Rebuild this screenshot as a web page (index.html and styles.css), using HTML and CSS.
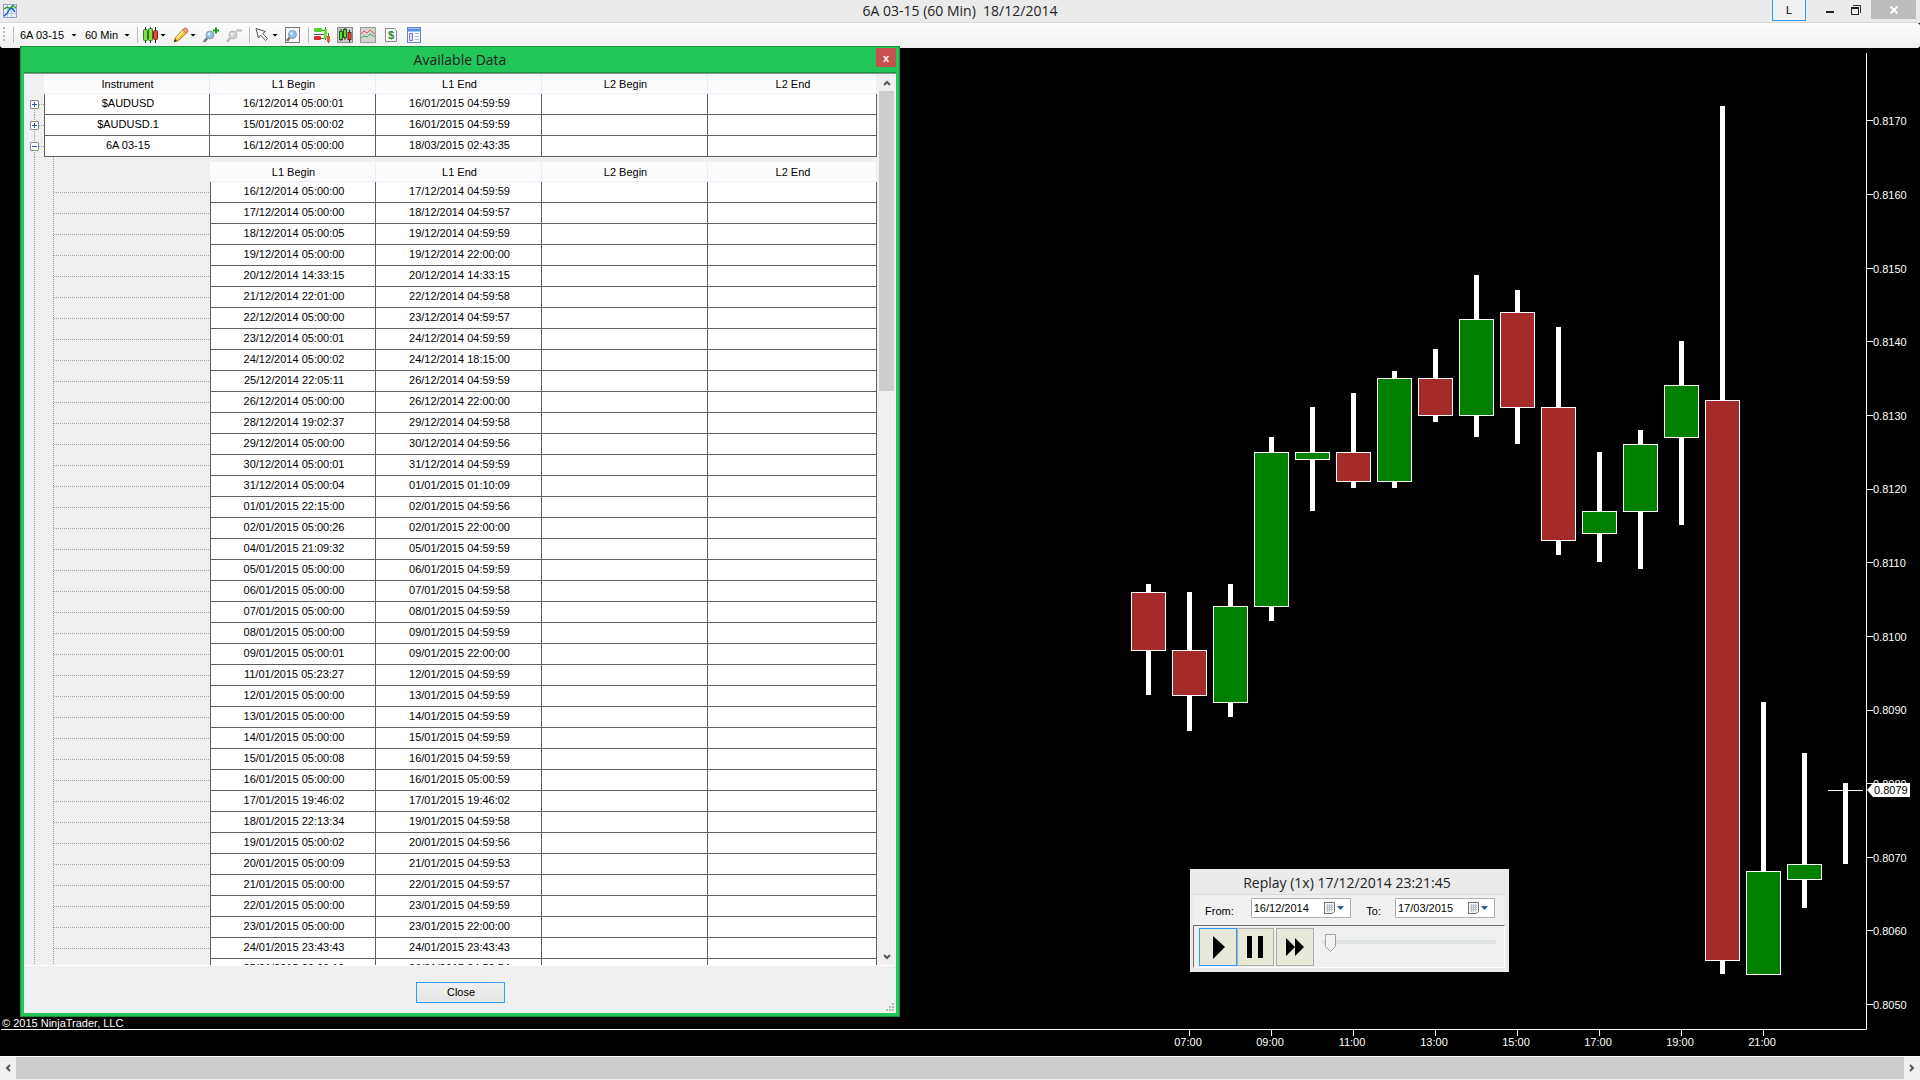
FILE: index.html
```html
<!DOCTYPE html>
<html lang="en">
<head>
<meta charset="utf-8">
<title>6A 03-15 (60 Min) 18/12/2014</title>
<link rel="stylesheet" href="styles.css">
</head>
<body>
<header class="titlebar">
  <svg class="app-icon" width="14" height="14" viewBox="0 0 14 14"><rect x=".5" y=".5" width="13" height="13" fill="#e8f0fa" stroke="#8f9fd0"/><path d="M4.500 1v12M8.500 1v12M1 4.500h12M1 9.500h12" stroke="#b9c6e6"/><path d="M1 5L4 3L7 4.500L10 1.500L13 4" fill="none" stroke="#2aa52a" stroke-width="1.500"/><path d="M1 12L4 9.500L6 6L9 4L12 8" fill="none" stroke="#1f66c8" stroke-width="1.500"/></svg>
  <h1 class="title">6A 03-15 (60 Min)&nbsp; 18/12/2014</h1>
  <div class="window-buttons">
    <button class="link-button">L</button>
    <button class="caption-button" aria-label="Minimize"><svg width="10" height="10" viewBox="0 0 10 10"><path d="M1 7h8" stroke="#222" stroke-width="2"/></svg></button>
    <button class="caption-button" aria-label="Restore"><svg width="10" height="10" viewBox="0 0 10 10"><path d="M2 .5h7.500V8" fill="none" stroke="#333"/><rect x=".5" y="3" width="7" height="6.500" fill="none" stroke="#222"/><path d="M0 3h8" stroke="#222" stroke-width="2"/></svg></button>
    <button class="caption-button caption-close" aria-label="Close window"><svg width="8" height="8" viewBox="0 0 8 8"><path d="M.5 .5l7 7M7.500 .5l-7 7" stroke="#fff" stroke-width="2"/></svg></button>
  </div>
</header>

<nav class="toolbar" aria-label="Chart">
  <span class="grip"></span>
  <span class="separator"></span>
  <button class="combo instrument">6A 03-15<i class="caret"></i></button>
  <button class="combo">60 Min<i class="caret"></i></button>
  <span class="separator"></span>
  <button class="tool drop" aria-label="Chart style"><svg width="16" height="16" viewBox="0 0 16 16"><path d="M2.500 0v16M7.500 0v16M12.500 0v16" stroke="#222"/><rect x=".5" y="2.500" width="4" height="11" rx="1" fill="#7ee04e" stroke="#2b7a1c"/><rect x="5.500" y="1.500" width="4" height="12" rx="1" fill="#7ee04e" stroke="#2b7a1c"/><rect x="10.500" y="3.500" width="4" height="9" rx="1" fill="#e8453c" stroke="#8e1e18"/></svg><i class="caret"></i></button>
  <button class="tool drop" aria-label="Drawing tools"><svg width="16" height="16" viewBox="0 0 16 16"><path d="M1 15l1.500-4.500L11 1.500q1.500-1 3 .5t.5 3L5.500 13.500z" fill="#f8c63c" stroke="#b07818"/><path d="M3.500 11L12 2.500" stroke="#fff0a8" stroke-width="1.500"/><path d="M11 1.500q1.500-1 3 .5t.5 3l-1.500 1.300L9.700 3z" fill="#e8a08c" stroke="#a8654c" stroke-width=".7"/><path d="M1 15l1-3 2 2z" fill="#333"/></svg><i class="caret"></i></button>
  <button class="tool" aria-label="Zoom in"><svg width="16" height="16" viewBox="0 0 16 16"><path d="M5 10l-4 5" stroke="#777" stroke-width="2.500"/><circle cx="7" cy="8" r="4" fill="#8cc3ee" stroke="#8d9db0"/><circle cx="6" cy="7" r="1.500" fill="#d8effc"/><path d="M10 3.500h6M13 .5v6" stroke="#0ca31a" stroke-width="2"/></svg></button>
  <button class="tool" aria-label="Zoom out"><svg width="16" height="16" viewBox="0 0 16 16"><path d="M5 10l-4 5" stroke="#bbb" stroke-width="2.500"/><circle cx="7" cy="8" r="4" fill="#d4d4d4" stroke="#b5b5b5"/><circle cx="6" cy="7" r="1.500" fill="#eee"/><path d="M10 3.500h6" stroke="#bbb" stroke-width="2"/></svg></button>
  <span class="separator"></span>
  <button class="tool drop" aria-label="Cursor"><svg width="16" height="16" viewBox="0 0 16 16"><path d="M1 1.500l9.500 3-3 2 5 5-2 2-5-5.500-2 3z" fill="#fff" stroke="#555"/></svg><i class="caret"></i></button>
  <button class="tool" aria-label="Zoom frame"><svg width="16" height="16" viewBox="0 0 16 16"><rect x=".5" y=".5" width="14" height="15" fill="#fafafa" stroke="#777"/><path d="M5 10l-3 4" stroke="#777" stroke-width="2.500"/><circle cx="7.500" cy="7.500" r="4" fill="#8cc3ee" stroke="#8d9db0"/><circle cx="6.500" cy="6.500" r="1.500" fill="#d8effc"/></svg></button>
  <span class="separator"></span>
  <button class="tool" aria-label="Chart trader"><svg width="16" height="16" viewBox="0 0 16 16"><rect x="0" y="1" width="8" height="4" rx="1" fill="#4fd62e"/><rect x="0" y="9" width="7" height="4" rx="1" fill="#e02a20"/><path d="M0 7.500h10M8 3.500h3M7 11.500h3" stroke="#555"/><path d="M11.500 0v13M14.500 6v10" stroke="#555"/><rect x="10" y="2" width="3" height="10" fill="#6ddc3c"/><rect x="13" y="9" width="3" height="6" fill="#e8564c"/></svg></button>
  <button class="tool" aria-label="Data series"><svg width="16" height="16" viewBox="0 0 16 16"><rect x=".5" y=".5" width="15" height="15" fill="#ccc" stroke="#8a8a8a"/><path d="M4 2v12M8 1v12M12.500 3v12" stroke="#222"/><rect x="2.500" y="4.500" width="3" height="8" fill="#5fd63c" stroke="#245c18"/><rect x="6.500" y="2.500" width="3" height="8" fill="#5fd63c" stroke="#245c18"/><rect x="11" y="5.500" width="3" height="7" fill="#e8453c" stroke="#7a1c16"/></svg></button>
  <button class="tool" aria-label="Indicators"><svg width="16" height="16" viewBox="0 0 16 16"><rect x=".5" y=".5" width="15" height="15" fill="#d2d4d4" stroke="#9a9a9a"/><path d="M1 7l3-3 3 2 3-3 5 4" fill="none" stroke="#e2574c"/><path d="M1 11l3-2 3 1 3-3 5 3" fill="none" stroke="#3fae6a"/></svg></button>
  <button class="tool" aria-label="Strategies"><svg width="16" height="16" viewBox="0 0 16 16"><path d="M2.500 1.500h9l2 2v11h-11z" fill="#fff" stroke="#888"/><text class="dollar" x="8" y="12">$</text></svg></button>
  <button class="tool" aria-label="Properties"><svg width="16" height="16" viewBox="0 0 16 16"><rect x="1.500" y=".5" width="13" height="15" fill="#f6f8fc" stroke="#6a83b8"/><path d="M2 3h12" stroke="#4f8fe8" stroke-width="3"/><rect x="3.500" y="6.500" width="3" height="7" fill="#e2dcfa" stroke="#8a6fe0"/><path d="M9 6.500h4M9 9.500h4M9 12.500h4" stroke="#a9bcdc"/></svg></button>
</nav>

<main class="workspace">
  <svg class="chart" viewBox="0 48 1920 1008" preserveAspectRatio="xMaxYMax meet">
    <path class="axis" d="M1866.500 53V1029.500H1"/>
    <path class="axis" d="M1867 120.500h6M1867 194.500h6M1867 268.500h6M1867 341.500h6M1867 415.500h6M1867 489.500h6M1867 562.500h6M1867 636.500h6M1867 710.500h6M1867 783.500h6M1867 857.500h6M1867 930.500h6M1867 1004.500h6"/>
    <path class="axis" d="M1189.500 1030v6M1271.500 1030v6M1353.500 1030v6M1435.500 1030v6M1517.500 1030v6M1599.500 1030v6M1681.500 1030v6M1763.500 1030v6"/>
    <g class="price">
      <text x="1873" y="125">0.8170</text><text x="1873" y="199">0.8160</text><text x="1873" y="273">0.8150</text><text x="1873" y="346">0.8140</text><text x="1873" y="420">0.8130</text><text x="1873" y="493">0.8120</text><text x="1873" y="567">0.8110</text><text x="1873" y="641">0.8100</text><text x="1873" y="714">0.8090</text><text x="1873" y="788">0.8080</text><text x="1873" y="862">0.8070</text><text x="1873" y="935">0.8060</text><text x="1873" y="1009">0.8050</text>
    </g>
    <g class="time">
      <text x="1188" y="1046">07:00</text><text x="1270" y="1046">09:00</text><text x="1352" y="1046">11:00</text><text x="1434" y="1046">13:00</text><text x="1516" y="1046">15:00</text><text x="1598" y="1046">17:00</text><text x="1680" y="1046">19:00</text><text x="1762" y="1046">21:00</text>
    </g>
    <text class="price" x="2" y="1027">© 2015 NinjaTrader, LLC</text>
    <path class="wick" d="M1148.500 584V695M1189.500 592V731M1230.500 584V717M1271.500 437V621M1312.500 407V511M1353.500 393V488M1394.500 371V488M1435.500 349V422M1476.500 275V437M1517.500 290V444M1558.500 327V555M1599.500 452V562M1640.500 430V569M1681.500 341V525M1722.500 106V974M1763.500 702V871M1804.500 753V908M1845.500 783V864"/>
    <path class="axis" d="M1828 790.500h35"/>
    <g class="down">
      <rect x="1131.500" y="592.500" width="34" height="58"/><rect x="1172.500" y="650.500" width="34" height="45"/><rect x="1336.500" y="452.500" width="34" height="29"/><rect x="1418.500" y="378.500" width="34" height="37"/><rect x="1500.500" y="312.500" width="34" height="95"/><rect x="1541.500" y="407.500" width="34" height="133"/><rect x="1705.500" y="400.500" width="34" height="560"/>
    </g>
    <g class="up">
      <rect x="1213.500" y="606.500" width="34" height="96"/><rect x="1254.500" y="452.500" width="34" height="154"/><rect x="1295.500" y="452.500" width="34" height="7"/><rect x="1377.500" y="378.500" width="34" height="103"/><rect x="1459.500" y="319.500" width="34" height="96"/><rect x="1582.500" y="511.500" width="34" height="22"/><rect x="1623.500" y="444.500" width="34" height="67"/><rect x="1664.500" y="385.500" width="34" height="52"/><rect x="1746.500" y="871.500" width="34" height="103"/><rect x="1787.500" y="864.500" width="34" height="15"/>
    </g>
    <path class="last-flag" d="M1867 790L1873 783H1910V797H1873z"/>
    <text class="last-price" x="1874" y="794">0.8079</text>
  </svg>

  <section class="dialog" aria-labelledby="dlg-title">
    <div class="dialog-title">
      <h2 id="dlg-title">Available Data</h2>
      <button class="dialog-x" aria-label="Close dialog">x</button>
    </div>
    <div class="grid-area">
      <div class="tables">
        <table class="grid">
          <colgroup><col class="c-tree"><col><col><col><col><col class="c-last"></colgroup>
          <thead><tr><th class="gutter"></th><th>Instrument</th><th>L1 Begin</th><th>L1 End</th><th>L2 Begin</th><th>L2 End</th></tr></thead>
          <tbody>
            <tr><td class="gutter branch first"><button class="expander plus" aria-label="Expand"></button></td><td>$AUDUSD</td><td>16/12/2014 05:00:01</td><td>16/01/2015 04:59:59</td><td></td><td></td></tr>
            <tr><td class="gutter branch"><button class="expander plus" aria-label="Expand"></button></td><td>$AUDUSD.1</td><td>15/01/2015 05:00:02</td><td>16/01/2015 04:59:59</td><td></td><td></td></tr>
            <tr><td class="gutter branch"><button class="expander" aria-label="Collapse"></button></td><td>6A 03-15</td><td>16/12/2014 05:00:00</td><td>18/03/2015 02:43:35</td><td></td><td></td></tr>
          </tbody>
        </table>
        <table class="grid child">
          <colgroup><col class="c-indent"><col><col><col><col class="c-last"></colgroup>
          <thead><tr><th class="gutter"></th><th>L1 Begin</th><th>L1 End</th><th>L2 Begin</th><th>L2 End</th></tr></thead>
          <tbody>
            <tr><td class="gutter"></td><td>16/12/2014 05:00:00</td><td>17/12/2014 04:59:59</td><td></td><td></td></tr>
            <tr><td class="gutter"></td><td>17/12/2014 05:00:00</td><td>18/12/2014 04:59:57</td><td></td><td></td></tr>
            <tr><td class="gutter"></td><td>18/12/2014 05:00:05</td><td>19/12/2014 04:59:59</td><td></td><td></td></tr>
            <tr><td class="gutter"></td><td>19/12/2014 05:00:00</td><td>19/12/2014 22:00:00</td><td></td><td></td></tr>
            <tr><td class="gutter"></td><td>20/12/2014 14:33:15</td><td>20/12/2014 14:33:15</td><td></td><td></td></tr>
            <tr><td class="gutter"></td><td>21/12/2014 22:01:00</td><td>22/12/2014 04:59:58</td><td></td><td></td></tr>
            <tr><td class="gutter"></td><td>22/12/2014 05:00:00</td><td>23/12/2014 04:59:57</td><td></td><td></td></tr>
            <tr><td class="gutter"></td><td>23/12/2014 05:00:01</td><td>24/12/2014 04:59:59</td><td></td><td></td></tr>
            <tr><td class="gutter"></td><td>24/12/2014 05:00:02</td><td>24/12/2014 18:15:00</td><td></td><td></td></tr>
            <tr><td class="gutter"></td><td>25/12/2014 22:05:11</td><td>26/12/2014 04:59:59</td><td></td><td></td></tr>
            <tr><td class="gutter"></td><td>26/12/2014 05:00:00</td><td>26/12/2014 22:00:00</td><td></td><td></td></tr>
            <tr><td class="gutter"></td><td>28/12/2014 19:02:37</td><td>29/12/2014 04:59:58</td><td></td><td></td></tr>
            <tr><td class="gutter"></td><td>29/12/2014 05:00:00</td><td>30/12/2014 04:59:56</td><td></td><td></td></tr>
            <tr><td class="gutter"></td><td>30/12/2014 05:00:01</td><td>31/12/2014 04:59:59</td><td></td><td></td></tr>
            <tr><td class="gutter"></td><td>31/12/2014 05:00:04</td><td>01/01/2015 01:10:09</td><td></td><td></td></tr>
            <tr><td class="gutter"></td><td>01/01/2015 22:15:00</td><td>02/01/2015 04:59:56</td><td></td><td></td></tr>
            <tr><td class="gutter"></td><td>02/01/2015 05:00:26</td><td>02/01/2015 22:00:00</td><td></td><td></td></tr>
            <tr><td class="gutter"></td><td>04/01/2015 21:09:32</td><td>05/01/2015 04:59:59</td><td></td><td></td></tr>
            <tr><td class="gutter"></td><td>05/01/2015 05:00:00</td><td>06/01/2015 04:59:59</td><td></td><td></td></tr>
            <tr><td class="gutter"></td><td>06/01/2015 05:00:00</td><td>07/01/2015 04:59:58</td><td></td><td></td></tr>
            <tr><td class="gutter"></td><td>07/01/2015 05:00:00</td><td>08/01/2015 04:59:59</td><td></td><td></td></tr>
            <tr><td class="gutter"></td><td>08/01/2015 05:00:00</td><td>09/01/2015 04:59:59</td><td></td><td></td></tr>
            <tr><td class="gutter"></td><td>09/01/2015 05:00:01</td><td>09/01/2015 22:00:00</td><td></td><td></td></tr>
            <tr><td class="gutter"></td><td>11/01/2015 05:23:27</td><td>12/01/2015 04:59:59</td><td></td><td></td></tr>
            <tr><td class="gutter"></td><td>12/01/2015 05:00:00</td><td>13/01/2015 04:59:59</td><td></td><td></td></tr>
            <tr><td class="gutter"></td><td>13/01/2015 05:00:00</td><td>14/01/2015 04:59:59</td><td></td><td></td></tr>
            <tr><td class="gutter"></td><td>14/01/2015 05:00:00</td><td>15/01/2015 04:59:59</td><td></td><td></td></tr>
            <tr><td class="gutter"></td><td>15/01/2015 05:00:08</td><td>16/01/2015 04:59:59</td><td></td><td></td></tr>
            <tr><td class="gutter"></td><td>16/01/2015 05:00:00</td><td>16/01/2015 05:00:59</td><td></td><td></td></tr>
            <tr><td class="gutter"></td><td>17/01/2015 19:46:02</td><td>17/01/2015 19:46:02</td><td></td><td></td></tr>
            <tr><td class="gutter"></td><td>18/01/2015 22:13:34</td><td>19/01/2015 04:59:58</td><td></td><td></td></tr>
            <tr><td class="gutter"></td><td>19/01/2015 05:00:02</td><td>20/01/2015 04:59:56</td><td></td><td></td></tr>
            <tr><td class="gutter"></td><td>20/01/2015 05:00:09</td><td>21/01/2015 04:59:53</td><td></td><td></td></tr>
            <tr><td class="gutter"></td><td>21/01/2015 05:00:00</td><td>22/01/2015 04:59:57</td><td></td><td></td></tr>
            <tr><td class="gutter"></td><td>22/01/2015 05:00:00</td><td>23/01/2015 04:59:59</td><td></td><td></td></tr>
            <tr><td class="gutter"></td><td>23/01/2015 05:00:00</td><td>23/01/2015 22:00:00</td><td></td><td></td></tr>
            <tr><td class="gutter"></td><td>24/01/2015 23:43:43</td><td>24/01/2015 23:43:43</td><td></td><td></td></tr>
            <tr><td class="gutter"></td><td>25/01/2015 22:00:10</td><td>26/01/2015 04:59:54</td><td></td><td></td></tr>
          </tbody>
        </table>
      </div>
      <div class="v-scroll">
        <button class="scroll-arrow" aria-label="Scroll up"><svg width="8" height="6" viewBox="0 0 8 6"><path d="M1 5l3-3 3 3" fill="none" stroke="#555" stroke-width="2"/></svg></button>
        <div class="v-track"><div class="v-thumb"></div></div>
        <button class="scroll-arrow" aria-label="Scroll down"><svg width="8" height="6" viewBox="0 0 8 6"><path d="M1 1l3 3 3-3" fill="none" stroke="#555" stroke-width="2"/></svg></button>
      </div>
    </div>
    <div class="dialog-footer">
      <button class="close-button">Close</button>
      <svg class="size-grip" width="8" height="8" viewBox="0 0 8 8"><path d="M6 0h2v2H6zM3 3h2v2H3zM6 3h2v2H6zM0 6h2v2H0zM3 6h2v2H3zM6 6h2v2H6z" fill="#b8b8b8"/></svg>
    </div>
  </section>

  <section class="replay" aria-labelledby="replay-title">
    <h2 id="replay-title">Replay (1x) 17/12/2014 23:21:45</h2>
    <div class="replay-dates">
      <label for="from">From:</label>
      <div class="date-box"><input id="from" type="text" value="16/12/2014"><button class="date-drop" aria-label="Pick start date"><svg width="20" height="12" viewBox="0 0 20 12"><path d="M.5 .5h10v9l-2 2h-8z" fill="#f4f4f4" stroke="#7d6f70"/><path d="M2 3.500h7M2 5.500h7M2 7.500h7M3.500 2v8M5.500 2v8M7.500 2v7" stroke="#b9c3d4"/><path d="M13 4h7l-3.500 4z" fill="#2f5597"/></svg></button></div>
      <label for="to">To:</label>
      <div class="date-box"><input id="to" type="text" value="17/03/2015"><button class="date-drop" aria-label="Pick end date"><svg width="20" height="12" viewBox="0 0 20 12"><path d="M.5 .5h10v9l-2 2h-8z" fill="#f4f4f4" stroke="#7d6f70"/><path d="M2 3.500h7M2 5.500h7M2 7.500h7M3.500 2v8M5.500 2v8M7.500 2v7" stroke="#b9c3d4"/><path d="M13 4h7l-3.500 4z" fill="#2f5597"/></svg></button></div>
    </div>
    <div class="replay-controls">
      <button class="play active" aria-label="Play"><svg width="20" height="24" viewBox="0 0 20 24"><path d="M5 1l12 11-12 12z"/></svg></button>
      <button class="play" aria-label="Pause"><svg width="20" height="24" viewBox="0 0 20 24"><path d="M1 1h5v22H1zM12 1h5v22h-5z"/></svg></button>
      <button class="play fast" aria-label="Fast forward"><svg width="20" height="24" viewBox="0 0 20 24"><path d="M1 3l9 9-9 9zM10 3l9 9-9 9z"/></svg></button>
      <input class="speed" type="range" min="0" max="100" value="2" aria-label="Replay speed">
    </div>
  </section>
</main>

<div class="h-scroll">
  <button class="scroll-arrow" aria-label="Scroll left"><svg width="6" height="8" viewBox="0 0 6 8"><path d="M5 1L2 4l3 3" fill="none" stroke="#555" stroke-width="2"/></svg></button>
  <div class="h-thumb"></div>
  <button class="scroll-arrow" aria-label="Scroll right"><svg width="6" height="8" viewBox="0 0 6 8"><path d="M1 1l3 3-3 3" fill="none" stroke="#555" stroke-width="2"/></svg></button>
</div>
</body>
</html>
```
FILE: styles.css
```css
* {
  box-sizing: border-box;
}

body {
  margin: 0;
  height: 100vh;
  display: flex;
  flex-direction: column;
  overflow: hidden;
  background: #000;
  color: #000;
  font: 11px/16px "Liberation Sans", Arial, sans-serif;
}

button {
  margin: 0;
  padding: 0;
  border: 0;
  background: none;
  color: inherit;
  font: inherit;
  display: flex;
  align-items: center;
  justify-content: center;
}

svg {
  display: block;
  flex: none;
}

h1,
h2 {
  margin: 0;
  font: 14px/22px "Open Sans", "Segoe UI", sans-serif;
  text-align: center;
  color: #222;
}

/* Title bar */

.titlebar {
  height: 23px;
  flex: none;
  display: grid;
  grid-template-columns: 1fr auto 1fr;
  align-items: center;
  padding: 0 3px;
  background: #ebebeb;
  border-bottom: 1px solid #d8d8d8;
}

.title {
  line-height: 22px;
}

.window-buttons {
  display: flex;
  justify-content: flex-end;
  align-self: start;
  gap: 12px;
}

.link-button {
  width: 34px;
  height: 21px;
  margin-right: 5px;
  border: 1px solid #3399ff;
  border-top: 0;
  background: #f0f0f0;
}

.caption-button {
  width: 14px;
  height: 19px;
}

.caption-close {
  width: 45px;
  margin-right: 1px;
  margin-left: -4px;
  background: #bcbcbc;
}

/* Toolbar */

.toolbar {
  height: 25px;
  flex: none;
  display: flex;
  align-items: center;
  padding: 0 2px 1px;
  background: linear-gradient(#fdfdfd, #f0f0f0);
  border-radius: 0 3px 3px 3px;
}

.grip {
  width: 4px;
  height: 16px;
  background: repeating-linear-gradient(#bdbdbd 0 2px, transparent 2px 4px) 1px 0 / 2px 100% no-repeat;
}

.separator {
  width: 1px;
  height: 16px;
  margin: 0 5px 0 7px;
  background: #bdbdbd;
}

.combo {
  gap: 6px;
  padding-left: 1px;
  justify-content: space-between;
}

.instrument {
  width: 58px;
}

.combo + .combo {
  margin-left: 7px;
}

.caret {
  width: 6px;
  height: 3px;
  background: #000;
  clip-path: polygon(0 0, 100% 0, 50% 100%);
}

.drop {
  gap: 1px;
}

.tool + .tool {
  margin-left: 7px;
}

.dollar {
  font: bold 11px "Liberation Sans", Arial, sans-serif;
  text-anchor: middle;
  fill: #1c8a1c;
}

/* Chart */

.workspace {
  flex: 1;
  min-height: 0;
  position: relative;
}

.chart {
  width: 100%;
  height: 100%;
}

.axis {
  fill: none;
  stroke: #fff;
}

.price,
.time {
  fill: #fff;
}

.time {
  text-anchor: middle;
}

.wick {
  fill: none;
  stroke: #fff;
  stroke-width: 5px;
}

.down {
  fill: #a52a2a;
  stroke: #fff;
}

.up {
  fill: #008000;
  stroke: #fff;
}

.last-flag {
  fill: #fff;
}

/* Available Data window */

.dialog {
  position: absolute;
  left: 20px;
  top: -2px;
  bottom: 39px;
  width: 880px;
  display: flex;
  flex-direction: column;
  padding: 0 3px 3px;
  background: #22c55a;
  border: 1px solid #18943f;
}

.dialog-title {
  height: 26px;
  flex: none;
  display: grid;
  grid-template-columns: 20px 1fr 20px;
  border-bottom: 1px solid #18943f;
}

.dialog-title h2 {
  grid-column: 2;
  line-height: 25px;
}

.dialog-x {
  height: 19px;
  margin-top: 1px;
  background: #c75050;
  color: #fff;
  font-weight: bold;
  line-height: 14px;
}

.grid-area {
  flex: 1;
  min-height: 0;
  display: flex;
  justify-content: space-between;
  overflow: hidden;
  background: #f0f0f0;
  border-top: 1px solid #909090;
}

.grid {
  width: 853px;
  table-layout: fixed;
  border-collapse: separate;
  border-spacing: 0;
  background: #fff;
}

.c-tree {
  width: 20px;
}

.c-indent {
  width: 186px;
}

.c-last {
  width: 169px;
}

.grid th,
.grid td {
  padding: 0 0 0 2px;
  text-align: center;
  font-weight: normal;
  white-space: nowrap;
}

.grid th {
  height: 20px;
  background: #fcfcfc;
  border-bottom: 1px solid #e6eefa;
  border-right: 1px solid #e6eefa;
}

.grid td {
  height: 21px;
  line-height: 18px;
  vertical-align: top;
  border-right: 1px solid #5f5f5f;
  border-bottom: 1px solid #5f5f5f;
}

.grid .gutter {
  padding: 0;
  vertical-align: middle;
  background-color: #f0f0f0;
  border: 0;
}

.grid .gutter + td {
  border-left: 1px solid #5f5f5f;
}

/* Dotted tree lines */

.grid .branch {
  background-image:
    repeating-linear-gradient(#a0a0a0 0 1px, transparent 1px 2px),
    repeating-linear-gradient(to right, #a0a0a0 0 1px, transparent 1px 2px);
  background-size: 1px 100%, 5px 1px;
  background-position: 10px 0, 15px 10px;
  background-repeat: no-repeat;
}

.grid .first {
  background-position: 10px 10px, 15px 10px;
}

.child {
  border-top: 5px solid transparent;
  background:
    repeating-linear-gradient(#a0a0a0 0 1px, transparent 1px 2px) 10px 0 / 1px 100% no-repeat border-box,
    repeating-linear-gradient(#a0a0a0 0 1px, transparent 1px 2px) 29px 0 / 1px 100% no-repeat border-box,
    #f0f0f0;
}

.child td {
  background-color: #fff;
}

.child .gutter {
  background-color: transparent;
}

.child td.gutter {
  background: repeating-linear-gradient(to right, #a0a0a0 0 1px, transparent 1px 2px) 30px 10px / 155px 1px no-repeat;
}

.expander {
  width: 9px;
  height: 9px;
  margin-left: 6px;
  border: 1px solid #8a8a8a;
  border-radius: 1px;
  background: linear-gradient(#2b50b0, #2b50b0) center / 5px 1px no-repeat #fff;
}

.plus {
  background:
    linear-gradient(#2b50b0, #2b50b0) center / 5px 1px no-repeat,
    linear-gradient(#2b50b0, #2b50b0) center / 1px 5px no-repeat,
    #fff;
}

/* Scroll bars */

.v-scroll {
  width: 17px;
  display: flex;
  flex-direction: column;
  border-right: 1px solid #fff;
  background: #f0f0f0;
}

.v-scroll .scroll-arrow {
  height: 17px;
  flex: none;
}

.v-track {
  flex: 1;
}

.v-thumb {
  width: 15px;
  height: 35%;
  background: #cdcdcd;
}

.h-scroll {
  height: 24px;
  flex: none;
  display: flex;
  padding-bottom: 1px;
  background: #f0f0f0;
  border-top: 1px solid #fff;
}

.h-scroll .scroll-arrow {
  width: 16px;
}

.h-thumb {
  flex: 1;
  background: #cdcdcd;
}

/* Dialog footer */

.dialog-footer {
  position: relative;
  height: 48px;
  flex: none;
  display: flex;
  justify-content: center;
  align-items: flex-start;
  padding-top: 16px;
  background: #f0f0f0;
  border-top: 1px solid #fff;
}

.close-button {
  width: 89px;
  height: 21px;
  padding: 0 0 2px 2px;
  border: 1px solid #3399ff;
  background: linear-gradient(#f0f0f0, #e4e4e4);
}

.size-grip {
  position: absolute;
  right: 2px;
  bottom: 2px;
}

/* Replay window */

.replay {
  position: absolute;
  right: 411px;
  bottom: 84px;
  width: 319px;
  padding: 0 4px 4px 3px;
  background: #ebebeb;
}

.replay h2 {
  padding: 3px 4px 0 0;
  border-bottom: 1px solid #dcdcdc;
}

.replay-dates {
  height: 30px;
  display: flex;
  align-items: center;
  padding: 0 10px 4px 12px;
  background: #f0f0f0;
}

.replay-dates label {
  padding-top: 6px;
}

.date-box {
  width: 100px;
  height: 20px;
  display: flex;
  align-items: center;
  padding: 0 6px 0 2px;
  border: 1px solid #aab0b5;
  background: #fff;
}

label + .date-box {
  margin-left: 17px;
}

.date-box + label {
  margin-left: auto;
}

.date-box:last-child {
  margin-left: 14px;
}

.date-box input {
  flex: 1;
  min-width: 0;
  padding: 0;
  border: 0;
  background: none;
  font: inherit;
}

.replay-controls {
  height: 43px;
  display: flex;
  align-items: flex-start;
  padding: 2px 8px 2px 5px;
  background: #f0f0f0;
  border: 1px solid #fff;
  border-top-color: #6e6e6e;
  border-left-color: #6e6e6e;
}

.play {
  width: 37px;
  height: 38px;
  flex: none;
  border: 1px solid #acacac;
  background: #e8e8d8;
}

.play.active {
  width: 38px;
  border-color: #3399ff;
}

.play.fast {
  width: 38px;
  margin-left: 2px;
}

.speed {
  flex: 1;
  min-width: 0;
  height: 20px;
  margin: 5px 0 0 8px;
  appearance: none;
  background: linear-gradient(#dfe3e3, #dfe3e3) 0 7px / 100% 4px no-repeat;
}

.speed::-webkit-slider-thumb {
  appearance: none;
  width: 11px;
  height: 19px;
  background: url("data:image/svg+xml,%3Csvg xmlns='http://www.w3.org/2000/svg' width='11' height='19'%3E%3Cpath d='M.5 .5h10v12l-5 5-5-5z' fill='%23f4f4f4' stroke='%23a0a0a0'/%3E%3C/svg%3E") no-repeat;
}
```
